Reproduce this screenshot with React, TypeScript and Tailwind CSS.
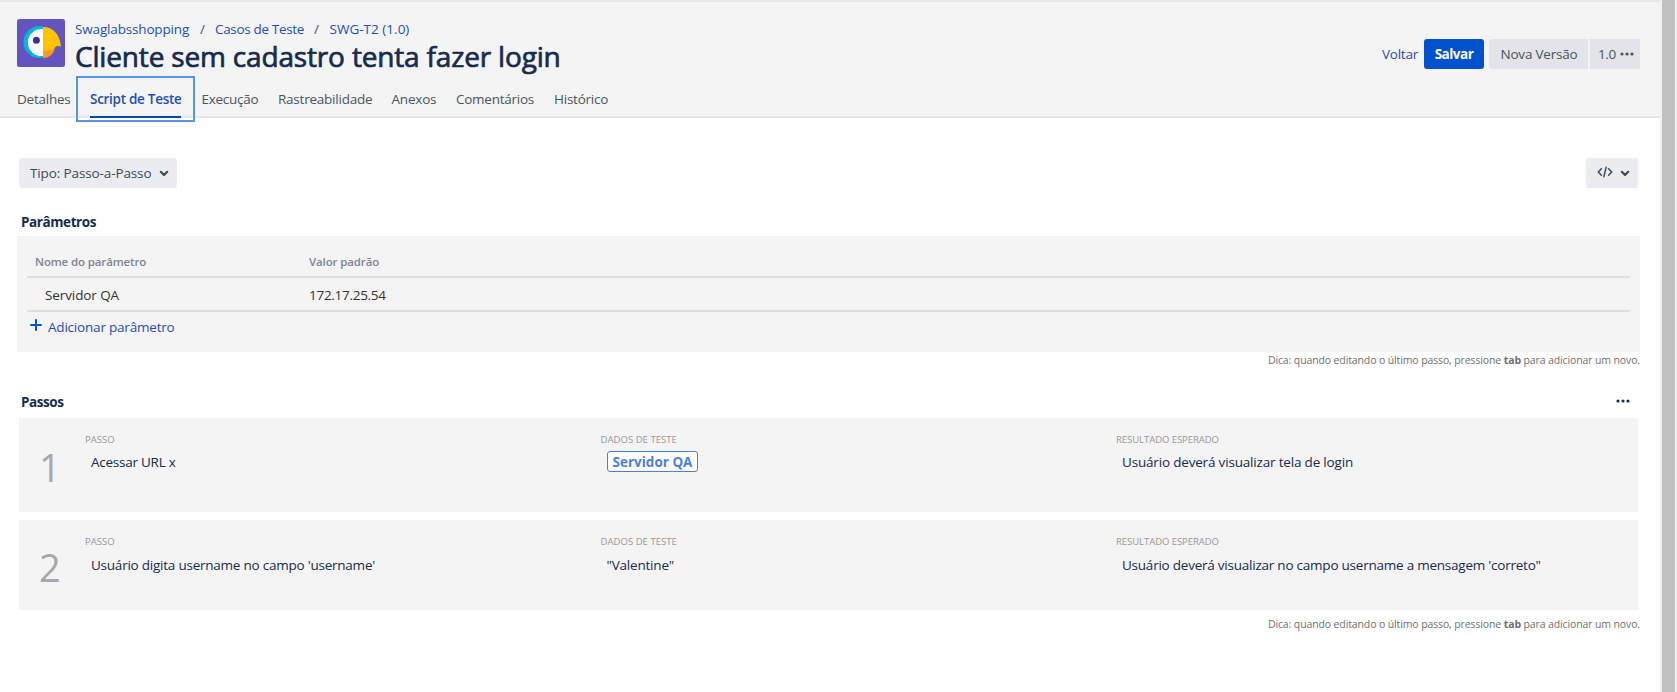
import type { ReactNode } from "react";

const Dots = ({ className = "" }: { className?: string }) => (
  <svg width="14" height="4" viewBox="0 0 14 4" fill="currentColor" className={className}>
    <circle cx="2" cy="2" r="1.600" />
    <circle cx="7" cy="2" r="1.600" />
    <circle cx="12" cy="2" r="1.600" />
  </svg>
);

const Chevron = () => (
  <svg width="10" height="7" viewBox="0 0 10 7" fill="none" stroke="currentColor" strokeWidth="2.200" strokeLinecap="round" strokeLinejoin="round">
    <path d="M1.8 1.8 5 5 8.2 1.8" />
  </svg>
);

const Logo = () => (
  <svg width="48" height="48" viewBox="0 0 48 48" className="shrink-0">
    <rect width="48" height="48" rx="2.5" fill="#6554c0" />
    <path d="M26 7.400a16 16 0 1 0 0 31.200z" fill="#00b8d9" />
    <path d="M26 10.100a13.500 13.500 0 1 0 0 26.800z" fill="#fff" />
    <path d="M26 39c6.500 0 11.500-4.500 12-11.500L26 30z" fill="#ff991f" />
    <path d="M26 8c10 0 17 7.500 18 19.500-3-1-4.500-.8-6.500 1.300-3 2.500-6.500 3.200-11.500 3.200z" fill="#ffc400" />
    <circle cx="19.400" cy="21.200" r="3.500" fill="#403294" />
  </svg>
);

const TABS = [
  { label: "Detalhes", cls: "w-[73px] tracking-[-0.23px]" },
  { label: "Script de Teste", cls: "w-[111.5px] tracking-[-0.285px]", active: true },
  { label: "Execução", cls: "w-[76.5px] tracking-[-0.27px]" },
  { label: "Rastreabilidade", cls: "w-[113.5px] tracking-[-0.23px]" },
  { label: "Anexos", cls: "w-[64.5px] tracking-[-0.2px]" },
  { label: "Comentários", cls: "w-[98px] tracking-[-0.25px]" },
  { label: "Histórico", cls: "w-[60px] tracking-[-0.24px]" },
];

const Hint = () => (
  <p className="text-right text-[10.5px] leading-4 tracking-[-0.122px] text-[#6f6f6f]">
    Dica: quando editando o último passo, pressione <b className="font-bold">tab</b> para adicionar um novo.
  </p>
);

const Field = ({ label, labelCls, children }: { label: string; labelCls: string; children: ReactNode }) => (
  <div className="w-[515.5px]">
    <div className={`text-[9.5px] leading-3 text-[#999] ${labelCls}`}>{label}</div>
    {children}
  </div>
);

export default function App() {
  return (
    <div className="flex h-[692px] w-[1677px] overflow-hidden bg-white font-['Open_Sans',sans-serif] text-[13.5px] leading-5 whitespace-nowrap text-[#172b4d]">
      <div className="w-[1660px]">
        <header className="flex h-[118px] justify-between border-t-2 border-b-2 border-[#e6e6e6] bg-[#f4f4f4] pr-5 pl-[17px]">
          <div className="flex flex-col pt-[17px]">
            <div className="flex h-[54px] gap-[10px]">
              <Logo />
              <div>
                <nav className="flex h-5 text-[#1d4fb5]">
                  <a className="w-[125px] tracking-[-0.16px]">Swaglabsshopping</a>
                  <span className="w-[15px] text-[#4a5560]">/</span>
                  <a className="w-[99px] tracking-[-0.335px]">Casos de Teste</a>
                  <span className="w-4 text-[#4a5560]">/</span>
                  <a className="-ml-[0.5px] tracking-[0.02px]">SWG-T2 (1.0)</a>
                </nav>
                <h1 className="text-[28px] leading-[34px] font-medium tracking-[-0.17px] [-webkit-text-stroke:0.7px_#172b4d]">
                  Cliente sem cadastro tenta fazer login
                </h1>
              </div>
            </div>
            <div className="mt-4 flex h-[29px] shrink-0 text-[#4a5560]">
              {TABS.map((t) =>
                t.active ? (
                  <div key={t.label} className={t.cls}>
                    <div className="relative h-[29px] w-[91px] border-b-2 border-[#0747a6] font-semibold text-[#1d4fb5]">
                      {t.label}
                      <span className="absolute -top-[13px] -left-[14px] h-[46px] w-[119px] border-2 border-[#5795e6]" />
                    </div>
                  </div>
                ) : (
                  <div key={t.label} className={t.cls}>{t.label}</div>
                ),
              )}
            </div>
          </div>
          <div className="mt-[37px] flex h-[30px] items-center text-[#4a5260]">
            <a className="mr-[6px] tracking-[-0.235px] text-[#1d4fb5]">Voltar</a>
            <button className="mr-[5px] h-[30px] w-[60px] rounded-[3px] bg-[#0052cc] font-bold tracking-[-0.5px] text-white">Salvar</button>
            <button className="mr-[2px] h-[30px] w-[99px] rounded-l-[3px] bg-[#e3e4e7] pl-px tracking-[-0.2px]">Nova Versão</button>
            <button className="flex h-[30px] w-[50px] items-center justify-center gap-1 bg-[#e3e4e7] pl-[2px] tracking-[-0.3px]">
              1.0 <Dots />
            </button>
          </div>
        </header>

        <main className="pr-5 pl-[17px]">
          <div className="mt-10 flex h-[30px] justify-between px-[2px] text-[#3f4a5c]">
            <button className="flex w-[158px] items-center gap-[8px] rounded-[3px] bg-[#ebecf0] pl-[11px] tracking-[-0.12px]">
              Tipo: Passo-a-Passo <Chevron />
            </button>
            <button className="flex w-[52px] items-center gap-[7px] rounded-[3px] bg-[#ebecf0] pl-[11px]">
              <svg width="16" height="12" viewBox="0 0 16 12" fill="none" stroke="currentColor" strokeWidth="1.500" className="-mt-[2px]">
                <path d="M4.800 2.200 1.300 6 4.800 9.800M11.200 2.200 14.700 6 11.200 9.800M9.300.6 6.700 11.400" />
              </svg>
              <Chevron />
            </button>
          </div>

          <h2 className="mt-6 h-6 pl-[4px] font-bold tracking-[-0.42px]">Parâmetros</h2>
          <section className="h-[116px] bg-[#f4f4f4] px-[10px] pt-[14px]">
            <div className="flex h-[28px] border-b-2 border-[#dfdfdf] pl-2 text-[11.5px] leading-6 font-semibold tracking-[-0.13px] text-[#7f8593]">
              <div className="w-[274px]">Nome do parâmetro</div>
              <div>Valor padrão</div>
            </div>
            <div className="flex h-[34px] border-b-2 border-[#dfdfdf] pt-[7px] pl-[18px] text-[#333]">
              <div className="w-[264px] tracking-[-0.1px]">Servidor QA</div>
              <div className="tracking-[-0.28px]">172.17.25.54</div>
            </div>
            <div className="flex pt-[5px] pl-[3px] text-[#0052cc]">
              <svg width="12" height="12" viewBox="0 0 12 12" fill="none" stroke="currentColor" strokeWidth="2" className="mt-[2px] mr-[6px]">
                <path d="M6 .3v11.400M.3 6h11.400" />
              </svg>
              <a className="tracking-[-0.2px] text-[#1d4fb5]">Adicionar parâmetro</a>
            </div>
          </section>
          <Hint />

          <div className="mt-6 flex h-[26px] justify-between pr-[10px] pl-[4px]">
            <h2 className="font-bold tracking-[-0.44px]">Passos</h2>
            <Dots className="mt-[7px]" />
          </div>

          <section className="mx-[2px] flex h-[94px] bg-[#f4f4f4] pt-4">
            <div className="w-[66px] pt-[13px] pl-[20px] text-[38px] leading-10 tracking-[-1.7px] text-[#a8a8a8]">1</div>
            <Field label="PASSO" labelCls="tracking-normal">
              <div className="mt-[6px] pl-[6px] tracking-[-0.25px]">Acessar URL x</div>
            </Field>
            <Field label="DADOS DE TESTE" labelCls="tracking-[0.05px]">
              <div className="mt-[5px] ml-[6px] h-[21px] w-[91px] rounded-[3px] border border-[#4c7fdc] bg-white pl-[5px] text-[#4c7fdc]">
                <div className="font-bold">Servidor QA</div>
              </div>
            </Field>
            <Field label="RESULTADO ESPERADO" labelCls="tracking-[-0.05px]">
              <div className="mt-[6px] pl-[6px] tracking-[-0.18px]">Usuário deverá visualizar tela de login</div>
            </Field>
          </section>

          <section className="mx-[2px] mt-2 flex h-[90px] bg-[#f4f4f4] pt-4">
            <div className="w-[66px] pt-[11px] pl-[20px] text-[38px] leading-10 tracking-[-1.7px] text-[#a8a8a8]">2</div>
            <Field label="PASSO" labelCls="tracking-normal">
              <div className="mt-[7px] pl-[6px] tracking-[-0.23px]">Usuário digita username no campo 'username'</div>
            </Field>
            <Field label="DADOS DE TESTE" labelCls="tracking-[0.05px]">
              <div className="mt-[7px] pl-[6px] tracking-[-0.2px]">"Valentine"</div>
            </Field>
            <Field label="RESULTADO ESPERADO" labelCls="tracking-[-0.05px]">
              <div className="mt-[7px] pl-[6px] tracking-[-0.23px]">Usuário deverá visualizar no campo username a mensagem 'correto"</div>
            </Field>
          </section>
          <div className="pt-[6px]">
            <Hint />
          </div>
        </main>
      </div>
      <div className="w-[2px] bg-[#f1f1f1]" />
      <div className="w-[13px] bg-[#c1c1c1]" />
      <div className="w-[2px] bg-[#f1f1f1]" />
    </div>
  );
}
